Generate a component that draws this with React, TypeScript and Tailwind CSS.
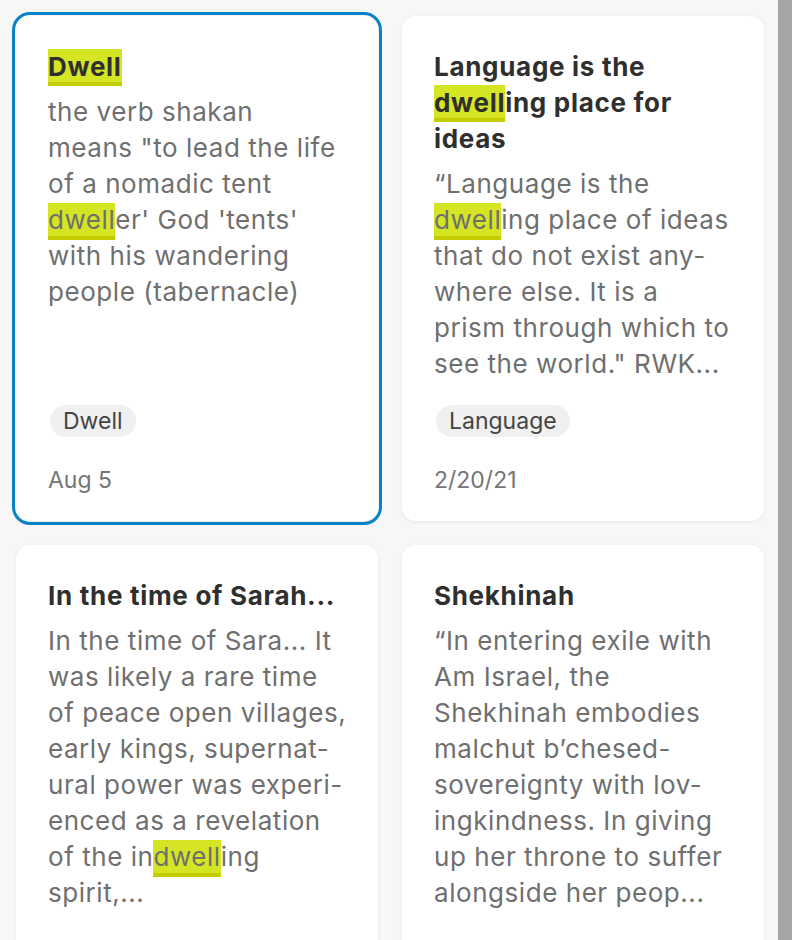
import React from "react";

const Hl = ({ children, title }: { children: React.ReactNode; title?: boolean }) => (
  <span
    className={
      "bg-[#d5e524] border-b-[4px] border-[#c3cd00] " + (title ? "pt-[2px] pb-0" : "pt-[1px] pb-[1px]")
    }
  >
    {children}
  </span>
);

const Lines = ({ lines }: { lines: React.ReactNode[] }) => (
  <>
    {lines.map((l, i) => (
      <span key={i} className="block whitespace-nowrap">
        {l}
      </span>
    ))}
  </>
);

type CardProps = {
  title: React.ReactNode[];
  body: React.ReactNode[];
  tag?: string;
  date?: string;
  selected?: boolean;
};

const Card = ({ title, body, tag, date, selected }: CardProps) => (
  <div
    className={
      "flex flex-col rounded-[14px] bg-white px-8 pt-[33px] shadow-[0_1px_4px_rgba(0,0,0,0.07)] " +
      (tag ? "pb-[25px] " : "pb-[80px] ") +
      (selected ? "outline-[3px] outline-solid outline-offset-[1px] outline-[#0a83c6]" : "")
    }
  >
    <div className="text-[26px] leading-[36px] font-bold tracking-[0.7px] text-[#2f2f2f]">
      <Lines lines={title} />
    </div>
    <div className="mt-[9px] text-[26px] leading-[36px] tracking-[0.55px] text-[#6f6f6f]">
      <Lines lines={body} />
    </div>
    {tag && (
      <div className="mt-auto pt-[23px]">
        <span className="ml-[2px] inline-flex h-[32px] items-center rounded-full bg-[#f0f0f0] px-[13px] text-[23px] text-[#444]">
          {tag}
        </span>
      </div>
    )}
    {date && <div className="mt-[27px] text-[23px] leading-[32px] text-[#757575]">{date}</div>}
  </div>
);

export default function App() {
  return (
    <div
      className="flex h-[940px] w-[792px] overflow-hidden bg-[#f7f7f7]"
      style={{ fontFamily: "Inter, 'Noto Sans', sans-serif" }}
    >
      <div className="flex-1 pl-4 pr-[14px] pt-4">
        <div className="grid grid-cols-2 gap-6">
          <Card
            selected
            title={[<Hl title>Dwell</Hl>]}
            body={[
              "the verb shakan",
              'means "to lead the life',
              "of a nomadic tent",
              <>
                <Hl>dwell</Hl>er' God 'tents'
              </>,
              "with his wandering",
              "people (tabernacle)",
            ]}
            tag="Dwell"
            date="Aug 5"
          />
          <Card
            title={[
              "Language is the",
              <>
                <Hl title>dwell</Hl>ing place for
              </>,
              "ideas",
            ]}
            body={[
              "“Language is the",
              <>
                <Hl>dwell</Hl>ing place of ideas
              </>,
              "that do not exist any-",
              "where else. It is a",
              "prism through which to",
              'see the world." RWK...',
            ]}
            tag="Language"
            date="2/20/21"
          />
          <Card
            title={["In the time of Sarah..."]}
            body={[
              "In the time of Sara... It",
              "was likely a rare time",
              "of peace open villages,",
              "early kings, supernat-",
              "ural power was experi-",
              "enced as a revelation",
              <>
                of the in<Hl>dwell</Hl>ing
              </>,
              "spirit,...",
            ]}
          />
          <Card
            title={["Shekhinah"]}
            body={[
              "“In entering exile with",
              "Am Israel, the",
              "Shekhinah embodies",
              "malchut b’chesed-",
              "sovereignty with lov-",
              "ingkindness. In giving",
              "up her throne to suffer",
              "alongside her peop...",
            ]}
          />
        </div>
      </div>
      <div className="h-full w-[14px] shrink-0 bg-[#a6a6a6]" />
    </div>
  );
}
